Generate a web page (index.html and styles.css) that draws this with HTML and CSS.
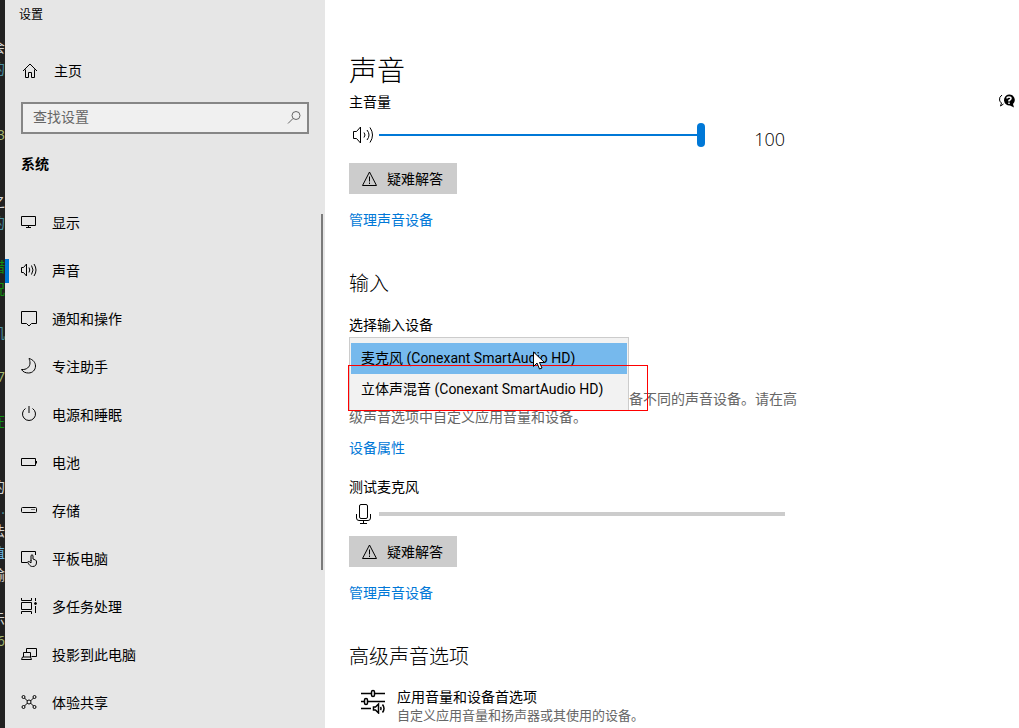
FILE: index.html
```html
<!DOCTYPE html>
<html lang="zh-CN">
<head>
    <meta charset="UTF-8">
    <meta name="viewport" content="width=device-width, initial-scale=1.0">
    <title>设置</title>
    <link rel="stylesheet" href="styles.css">
</head>
<body>
    <!-- editor window behind the settings window -->
    <div class="backdrop" aria-hidden="true">
        <span></span>
        <span class="c-white">会</span>
        <span class="c-teal">的</span>
        <span></span>
        <span></span>
        <span class="c-lime">3</span>
        <span></span>
        <span></span>
        <span class="c-white">之</span>
        <span class="c-teal">的</span>
        <span></span>
        <span class="c-green">错</span>
        <span class="c-green">况</span>
        <span></span>
        <span class="c-teal">机</span>
        <span></span>
        <span class="c-lime">7</span>
        <span></span>
        <span class="c-green">在</span>
        <span></span>
        <span></span>
        <span class="c-white">的</span>
        <span class="c-teal">.</span>
        <span class="c-white">法</span>
        <span class="c-blue">值</span>
        <span class="c-white">输</span>
        <span></span>
        <span class="c-white">示</span>
        <span class="c-lime">6</span>
    </div>

    <aside class="sidebar">
        <div class="window-title">设置</div>
        <a class="home" href="#">
            <svg class="icon" viewBox="0 0 18 18"><path d="M2 9 9 2l7 7M4.500 7.500v8h3v-5h3v5h3v-8"/></svg>
            主页
        </a>
        <form class="search">
            <input type="text" placeholder="查找设置" aria-label="查找设置">
            <button type="button" aria-label="搜索">
                <svg class="icon" viewBox="0 0 18 18"><circle cx="11" cy="6.500" r="4"/><path d="M8 9.500 3 14.500"/></svg>
            </button>
        </form>
        <h2 class="group-title">系统</h2>
        <nav class="nav">
            <a href="#">
                <svg class="icon" viewBox="0 0 18 18"><path d="M1.500 2.500h14v9h-14zM8.500 11.500v2M6 13.500h5"/></svg>
                显示
            </a>
            <a href="#" class="active">
                <svg class="icon" viewBox="0 0 18 18"><path d="M1.500 5.500h2l3-3.500v12l-3-3.500h-2zM9 5.500q1.500 2.500 0 5M11.500 3.500q3 4.500 0 9M14 2q4 6 0 12"/></svg>
                声音
            </a>
            <a href="#">
                <svg class="icon" viewBox="0 0 18 18"><path d="M1.500 1.500h15v12h-5l-2.500 2.500-2.500-2.500h-5z"/></svg>
                通知和操作
            </a>
            <a href="#">
                <svg class="icon" viewBox="0 0 18 18"><path d="M9 .500c4 1 6.500 4 6.500 7.500 0 4-3 7-7 7-3 0-5.500-1-7-3.500 5 .500 8.500-2.500 8.500-6.500 0-2-.500-3-1-4.500z"/></svg>
                专注助手
            </a>
            <a href="#">
                <svg class="icon" viewBox="0 0 18 18"><path d="M5.500 2.500a6.500 6.500 0 1 0 7 0M9 0v7"/></svg>
                电源和睡眠
            </a>
            <a href="#">
                <svg class="icon" viewBox="0 0 18 18"><path d="M1.500 4.500h14v7h-14zM16.500 7v2.500"/></svg>
                电池
            </a>
            <a href="#">
                <svg class="icon" viewBox="0 0 18 18"><rect x="1.500" y="5.500" width="15" height="5" rx="1"/><path d="M11.500 7.500h1M13.500 7.500h1"/></svg>
                存储
            </a>
            <a href="#">
                <svg class="icon" viewBox="0 0 18 18"><path d="M7 12.500H1.500v-11h14V5M11 11V5.500q1-1.500 2 0V9l2.500 1q1 .500 1 2c0 3-1 4.500-4 4.500-2 0-3-1-5-4.500 1-1 2-.500 3.500 1V10"/></svg>
                平板电脑
            </a>
            <a href="#">
                <svg class="icon" viewBox="0 0 18 18"><path d="M1.500 0v2.500h10V0M1.500 4.500h10v7h-10zM1.500 16v-2.500h10V16M15.500 0v3M15.500 8v7"/><circle cx="15.500" cy="5.500" r="1" fill="currentColor"/></svg>
                多任务处理
            </a>
            <a href="#">
                <svg class="icon" viewBox="0 0 18 18"><path d="M6.500 6V2.500h10v8h-5M3.500 11V6.500h7V11M1.500 13.500l1-2.500h8l1 2.500z"/></svg>
                投影到此电脑
            </a>
            <a href="#">
                <svg class="icon" viewBox="0 0 18 18"><circle cx="3.500" cy="3" r="1.500"/><circle cx="14.500" cy="3" r="1.500"/><circle cx="3.500" cy="13" r="1.500"/><circle cx="14.500" cy="13" r="1.500"/><circle cx="9" cy="8" r="2"/><path d="M4.500 4l3 3M13.500 4l-3 3M4.500 12l3-3M13.500 12l-3-3"/></svg>
                体验共享
            </a>
        </nav>
        <div class="scrollbar"></div>
    </aside>

    <main class="content">
        <h1>声音</h1>
        <label for="volume" class="volume-label">主音量</label>
        <div class="volume-row">
            <svg class="icon icon-md" viewBox="0 0 24 24"><path d="M2.500 8.500h3L9.500 4v16l-4-4.500h-3zM13 9.500q2 2.500 0 5M16 7q4 5 0 10M19 4.500q5 7.500 0 15"/></svg>
            <input type="range" id="volume" min="0" max="100" value="100">
            <output for="volume">100</output>
        </div>
        <button type="button" class="trouble">
            <svg class="icon" viewBox="0 0 18 18"><path d="M8.500 2 15.500 15.500h-14zM8.500 6.500v5M8.500 12.500v1.500"/></svg>
            疑难解答
        </button>
        <a href="#">管理声音设备</a>

        <h2>输入</h2>
        <label for="inputDevice">选择输入设备</label>
        <div class="device">
            <select id="inputDevice">
                <option>麦克风 (Conexant SmartAudio HD)</option>
                <option>立体声混音 (Conexant SmartAudio HD)</option>
            </select>
            <!-- opened list -->
            <ul class="device-menu" role="listbox" aria-label="选择输入设备">
                <li class="selected" role="option" aria-selected="true">麦克风 (Conexant SmartAudio HD)</li>
                <li role="option" aria-selected="false">立体声混音 (Conexant SmartAudio HD)</li>
            </ul>
            <div class="marker"></div>
            <svg class="cursor" viewBox="0 0 12 19"><path d="M.500 1v14.500l3.500-3.500 2.500 6 2.500-1-2.500-5.500h5z"/></svg>
        </div>
        <p class="hint">某些应用可能设置为使用与此处选择的声音设备不同的声音设备。请在高级声音选项中自定义应用音量和设备。</p>
        <a href="#">设备属性</a>

        <label for="micLevel" class="mic-label">测试麦克风</label>
        <div class="mic-row">
            <svg class="icon icon-md" viewBox="0 0 24 24"><rect x="8.500" y="2.500" width="8" height="14" rx="1.500"/><path d="M5.500 12v4q0 2.500 2.500 2.500h9q2.500 0 2.500-2.500v-4M12.500 18.500v3M9 21.500h7"/></svg>
            <progress id="micLevel" max="100" value="0"></progress>
        </div>
        <button type="button" class="trouble">
            <svg class="icon" viewBox="0 0 18 18"><path d="M8.500 2 15.500 15.500h-14zM8.500 6.500v5M8.500 12.500v1.500"/></svg>
            疑难解答
        </button>
        <a href="#">管理声音设备</a>

        <h2>高级声音选项</h2>
        <a class="advanced" href="#">
            <svg class="icon icon-lg" viewBox="0 0 26 26"><path d="M1 5.500h10M15 5.500h10M1 13.500h3M8 13.500h17M1 20.500h10"/><rect x="11.500" y="2.500" width="3" height="6" rx="1.500"/><rect x="4.500" y="10.500" width="3" height="6" rx="1.500"/><path d="M13.500 19h2l3-3v9l-3-3h-2zM20.500 19q1 1.500 0 3M22.500 16.500q3 4 0 8"/></svg>
            <span>
                应用音量和设备首选项
                <small>自定义应用音量和扬声器或其使用的设备。</small>
            </span>
        </a>
    </main>

    <button type="button" class="help" aria-label="获取帮助">
        <svg viewBox="0 0 18 16"><path d="M4 2Q1 4 1.500 7q.5 2 2 3l-1 3 3-2" fill="none" stroke="#000"/><path d="M11 1.500a5.500 5.500 0 1 0 1 11l4 2-1-3.500a5.500 5.500 0 0 0-4-9.500z"/><path d="M9 5.500q0-1.500 2-1.500t2 1.500q0 1-2 2v1M11 9.500v1.500" fill="none" stroke="#fff" stroke-width="1.500"/></svg>
    </button>
</body>
</html>
```

FILE: styles.css
```css
* {
    box-sizing: border-box;
}
body {
    display: flex;
    min-height: 100vh;
    margin: 0;
    background: #fff;
    color: #000;
    font-family: "Open Sans", "Noto Sans CJK SC", sans-serif;
    font-size: 14px;
    line-height: 20px;
}
h1, h2, p, ul {
    margin: 0;
    padding: 0;
}
a {
    color: #0078d7;
    text-decoration: none;
}
button, input, select {
    font: inherit;
    color: inherit;
}
.icon {
    flex: none;
    width: 18px;
    height: 18px;
    fill: none;
    stroke: currentColor;
}
.icon-md {
    width: 24px;
    height: 24px;
}
.icon-lg {
    width: 26px;
    height: 26px;
    stroke-width: 1.5;
}

/* strip of the window behind */
.backdrop {
    display: flex;
    flex: 0 0 5px;
    flex-direction: column;
    align-items: flex-end;
    padding-top: 14px;
    overflow: hidden;
    background: #212121;
    line-height: 22px;
}
.backdrop span {
    height: 22px;
}
.c-white { color: #d4d4d4; }
.c-teal { color: #4a8fa0; }
.c-lime { color: #a5b870; }
.c-green { color: #109010; }
.c-blue { color: #6cb8e6; }

/* sidebar */
.sidebar {
    position: relative;
    flex: 0 0 320px;
    background: #e6e6e6;
}
.window-title {
    padding: 5px 14px 3px;
    font-size: 12px;
}
.home {
    display: flex;
    align-items: center;
    gap: 15px;
    height: 48px;
    margin-top: 19px;
    padding-left: 16px;
    color: #000;
}
.search {
    display: flex;
    align-items: center;
    height: 32px;
    margin: 7px 16px 0;
    border: 2px solid #868686;
    background: #f0f0f0;
}
.search input {
    flex: 1;
    min-width: 0;
    padding: 0 10px 2px;
    border: none;
    outline: none;
    background: none;
}
.search input::placeholder {
    color: #666;
}
.search button {
    display: flex;
    padding: 0 4px;
    border: none;
    background: none;
    color: #666;
}
.group-title {
    padding: 20px 16px;
    font-size: 14px;
    font-weight: bold;
}
.nav {
    padding-top: 5px;
}
.nav a {
    display: flex;
    align-items: center;
    gap: 14px;
    height: 48px;
    padding-left: 15px;
    color: #000;
}
.nav .active {
    padding-left: 0;
}
.nav .active::before {
    content: "";
    width: 4px;
    height: 24px;
    margin-right: -3px;
    background: #0078d7;
}
.scrollbar {
    position: absolute;
    top: 214px;
    right: 2px;
    width: 2px;
    height: 356px;
    background: #7a7a7a;
}

/* content */
.content {
    display: flex;
    flex: 1;
    flex-direction: column;
    align-items: flex-start;
    max-width: 500px;
    padding: 50px 24px 0;
}
.content h1 {
    font-size: 28px;
    font-weight: 300;
    line-height: 40px;
}
.content h2 {
    margin: 40px 0 17px;
    font-size: 20px;
    font-weight: 300;
    line-height: 28px;
}
.volume-label {
    margin-top: 2px;
}
.volume-row, .mic-row {
    display: flex;
    align-items: center;
    width: 100%;
    max-width: 436px;
    padding-left: 2px;
}
.volume-row {
    gap: 4px;
    margin: 7px 0 12px;
    height: 32px;
}
#volume {
    flex: 1;
    min-width: 0;
    height: 24px;
    margin: 0;
    background: none;
    appearance: none;
}
#volume::-webkit-slider-runnable-track {
    height: 2px;
    background: #0078d7;
}
#volume::-webkit-slider-thumb {
    width: 8px;
    height: 24px;
    margin-top: -11px;
    border-radius: 4px;
    background: #0078d7;
    appearance: none;
}
.volume-row output {
    width: 76px;
    padding-top: 8px;
    font-size: 18px;
    font-weight: 300;
    text-align: right;
}
.trouble {
    display: flex;
    align-items: center;
    gap: 8px;
    height: 31px;
    margin-bottom: 16px;
    padding: 0 14px 0 12px;
    border: none;
    background: #ccc;
}
.device {
    position: relative;
    width: 280px;
    margin: 2px 0 21px;
}
.device select {
    display: block;
    width: 100%;
    height: 32px;
    padding: 0 8px;
    border: 2px solid #999;
    background: #fff;
}
.device-menu {
    position: absolute;
    top: 0;
    left: 0;
    width: 100%;
    padding: 5px 1px;
    border: 1px solid #ccc;
    background: #f2f2f2;
    font-family: Roboto, "Noto Sans CJK SC", sans-serif;
    list-style: none;
}
.device-menu li {
    height: 31px;
    padding: 0 10px;
    line-height: 30px;
    white-space: nowrap;
}
.device-menu .selected {
    background: #76b9ed;
}
.marker {
    position: absolute;
    top: 28px;
    left: -1px;
    width: 300px;
    height: 46px;
    border: 1px solid #f00;
}
.cursor {
    position: absolute;
    top: 14px;
    left: 184px;
    width: 12px;
    height: 19px;
    fill: #fff;
    stroke: #000;
}
.hint {
    max-width: 450px;
    margin-bottom: 12px;
    color: #666;
    line-height: 18px;
}
.mic-label {
    margin-top: 19px;
}
.mic-row {
    gap: 4px;
    margin: 5px 0 10px;
}
#micLevel {
    flex: 1;
    min-width: 0;
    height: 4px;
    border: none;
    background: #ccc;
    appearance: none;
}
#micLevel::-webkit-progress-bar {
    background: #ccc;
}
.advanced {
    display: flex;
    align-items: flex-start;
    gap: 11px;
    padding-left: 11px;
    color: #000;
    line-height: 18px;
}
.advanced small {
    display: block;
    color: #666;
    font-size: 13px;
}

.help {
    align-self: flex-start;
    width: 18px;
    margin: 93px 3px 0 auto;
    padding: 0;
    border: none;
    background: none;
}
.help svg {
    display: block;
    width: 18px;
    height: 16px;
}
```
